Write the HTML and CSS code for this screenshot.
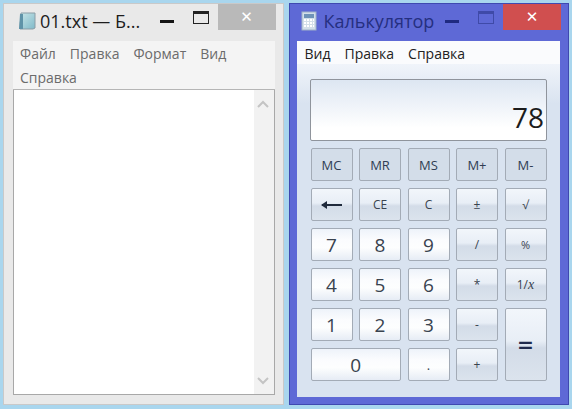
FILE: index.html
```html
<!DOCTYPE html>
<html lang="ru">
<head>
<meta charset="utf-8">
<title>Блокнот и Калькулятор</title>
<link rel="stylesheet" href="styles.css">
</head>
<body>
<main class="desktop">
  <section class="window notepad">
    <header class="titlebar">
      <svg class="app-icon" width="20" height="20" viewBox="0 0 20 20"><defs><linearGradient id="pg" x1="0" y1="0" x2="1" y2="1"><stop offset="0" stop-color="#c9e6e8"/><stop offset="1" stop-color="#7fb9c9"/></linearGradient></defs><path d="M4 2h14v15l-2 1H3z" fill="url(#pg)" stroke="#8b9da6"/><path d="M3 3h3v15H2z" fill="#5f93a8"/></svg>
      <span class="title">01.txt — Б...</span>
      <div class="controls">
        <span class="minimize"></span>
        <span class="maximize"></span>
        <span class="close close-idle">✕</span>
      </div>
    </header>
    <nav class="menu menu-wrap">
      <span>Файл</span><span>Правка</span><span>Формат</span><span>Вид</span><span>Справка</span>
    </nav>
    <div class="editor">
      <div class="paper"></div>
      <div class="scrollbar">
        <svg width="14" height="8" viewBox="0 0 14 8"><path d="M2 7 7 2l5 5" fill="none" stroke="#c4c4c4" stroke-width="2"/></svg>
        <svg width="14" height="8" viewBox="0 0 14 8"><path d="M2 1l5 5 5-5" fill="none" stroke="#c4c4c4" stroke-width="2"/></svg>
      </div>
    </div>
  </section>

  <section class="window calc">
    <header class="titlebar">
      <svg class="app-icon" width="16" height="20" viewBox="0 0 16 20"><rect x="1" y="1" width="14" height="18" fill="#d3dfe9" stroke="#9fb2c8"/><rect x="3" y="3" width="10" height="4" fill="#6f93b8"/><path d="M3 9h10M3 12h10M3 15h10" stroke="#fff" stroke-width="2" stroke-dasharray="2 1"/></svg>
      <span class="title">Калькулятор</span>
      <div class="controls">
        <span class="minimize"></span>
        <span class="maximize"></span>
        <span class="close close-active">✕</span>
      </div>
    </header>
    <div class="client">
      <nav class="menu menu-calc"><span>Вид</span><span>Правка</span><span>Справка</span></nav>
      <div class="pad">
        <output class="display">78</output>
        <div class="keys">
          <button class="key mem">MC</button><button class="key mem">MR</button><button class="key mem">MS</button><button class="key mem">M+</button><button class="key mem">M-</button>
          <button class="key op back"><svg width="22" height="10" viewBox="0 0 22 10"><path d="M1 5h20" stroke="#1f2a3c" stroke-width="2"/><path d="M0 5l6-4v8z" fill="#1f2a3c"/></svg></button><button class="key op small">CE</button><button class="key op small">C</button><button class="key op small">±</button><button class="key op small">√</button>
          <button class="key num">7</button><button class="key num">8</button><button class="key num">9</button><button class="key op small">/</button><button class="key op tiny">%</button>
          <button class="key num">4</button><button class="key num">5</button><button class="key num">6</button><button class="key op small">*</button><button class="key op small">1/<i>x</i></button>
          <button class="key num">1</button><button class="key num">2</button><button class="key num">3</button><button class="key op small">-</button><button class="key op equals">=</button>
          <button class="key num zero">0</button><button class="key num small">.</button><button class="key op small">+</button>
        </div>
      </div>
    </div>
  </section>
</main>
</body>
</html>
```
FILE: styles.css
```css
* { box-sizing: border-box; }
html, body { margin: 0; height: 100%; }
body {
  width: 572px;
  height: 409px;
  overflow: hidden;
  background: #a9d6ee;
  font-family: "Open Sans", "Noto Sans", sans-serif;
}
.desktop {
  display: flex;
  gap: 5px;
  padding: 3px 3px 4px 3px;
  height: 100%;
}
.window { display: flex; flex-direction: column; }
.notepad {
  width: 281px;
  background: #e9e9e9;
  border: 1px solid #c9c9c9;
  padding: 0 8px 9px 9px;
}
.calc {
  width: 281px;
  background: #5e69d6;
  border: 1px solid #3f49b0;
  padding: 0 8px 7px 7px;
}
.titlebar {
  display: flex;
  align-items: center;
  height: 37px;
  flex: none;
}
.app-icon { flex: none; margin-top: -4px; }
.notepad .app-icon { margin: -4px 3px 0 4px; }
.calc .app-icon { margin: -4px 3px 0 4px; }
.title {
  font-size: 18px;
  line-height: 24px;
  margin-top: -4px;
  color: #1d1d1d;
  white-space: nowrap;
}
.calc .title { color: #252f80; margin-left: 4px; }
.controls { display: flex; align-items: flex-start; margin: 0 -1px 0 auto; height: 100%; }
.minimize {
  width: 14px;
  height: 3px;
  background: #151515;
  margin: 16px 19px 0 0;
}
.calc .minimize { background: #1f2a80; }
.maximize {
  width: 16px;
  height: 13px;
  border: 1px solid #222;
  border-top-width: 3px;
  margin: 7px 9px 0 0;
}
.calc .maximize { border-color: #3f4aa8; }
.close {
  width: 58px;
  height: 26px;
  color: #fff;
  font: bold 15px/26px "DejaVu Sans", sans-serif;
  text-align: center;
}
.close-idle { background: #b9b9b9; }
.close-active { background: #d04f4f; }
.menu { flex: none; font-size: 14px; line-height: 23px; }
.menu-wrap {
  display: flex;
  flex-wrap: wrap;
  gap: 0 14px;
  height: 49px;
  padding: 1px 7px 0;
  background: #f4f4f4;
  color: #6b6b6b;
  border-bottom: 1px solid #b5b5b5;
}
.menu-calc {
  display: flex;
  gap: 14px;
  height: 23px;
  padding: 1px 8px 0;
  background: #fafbfd;
  color: #222;
}
.editor {
  flex: 1;
  display: flex;
  min-height: 0;
  background: #fff;
  border: 1px solid #a8a8a8;
  border-top: 0;
}
.paper { flex: 1; }
.scrollbar {
  width: 20px;
  background: #f2f2f2;
  display: flex;
  flex-direction: column;
  align-items: center;
  justify-content: space-between;
  padding: 10px 2px 9px 0;
}
.client {
  flex: 1;
  display: flex;
  flex-direction: column;
  background: #dbe4f0;
}
.pad {
  flex: 1;
  padding: 15px 13px 0;
  background: linear-gradient(#f0f4fa, #d9e3f0 40px);
}
.display {
  display: block;
  height: 62px;
  padding: 18px 2px 0 0;
  text-align: right;
  font-size: 28px;
  line-height: 38px;
  color: #1c1c1c;
  border: 1px solid #8f949c;
  border-radius: 2px;
  background: linear-gradient(#dde6f2, #fff 80%);
}
.keys {
  display: grid;
  grid-template-columns: repeat(5, 42px);
  grid-auto-rows: 33px;
  gap: 7px 6.5px;
  margin: 7px 0 0 1px;
}
.key {
  padding: 0;
  margin: 0;
  border: 1px solid #a3abb6;
  border-radius: 2px;
  font-family: "Open Sans", "Noto Sans", sans-serif;
  color: #39434f;
  display: flex;
  align-items: center;
  justify-content: center;
}
.mem { background: #d3dde9; font-size: 13px; color: #2f3d54; }
.op {
  background: linear-gradient(#f2f6fb, #e8eef6 45%, #d3dce8 55%, #dbe3ed);
  font-size: 12px;
}
.num {
  background: linear-gradient(#eef3fa, #fbfcfe 35%, #fdfefe 60%, #e6ecf5);
  font-size: 19px;
}
.small { font-size: 12px; }
.tiny { font-size: 11px; }
.key i { font-family: "Liberation Serif", serif; font-size: 14px; }
.zero { grid-column: span 2; }
.num.small { font-size: 13px; }
.equals {
  grid-column: 5;
  grid-row: 5 / span 2;
  font-size: 27px;
  font-weight: 600;
  color: #1f2a4c;
}
```
